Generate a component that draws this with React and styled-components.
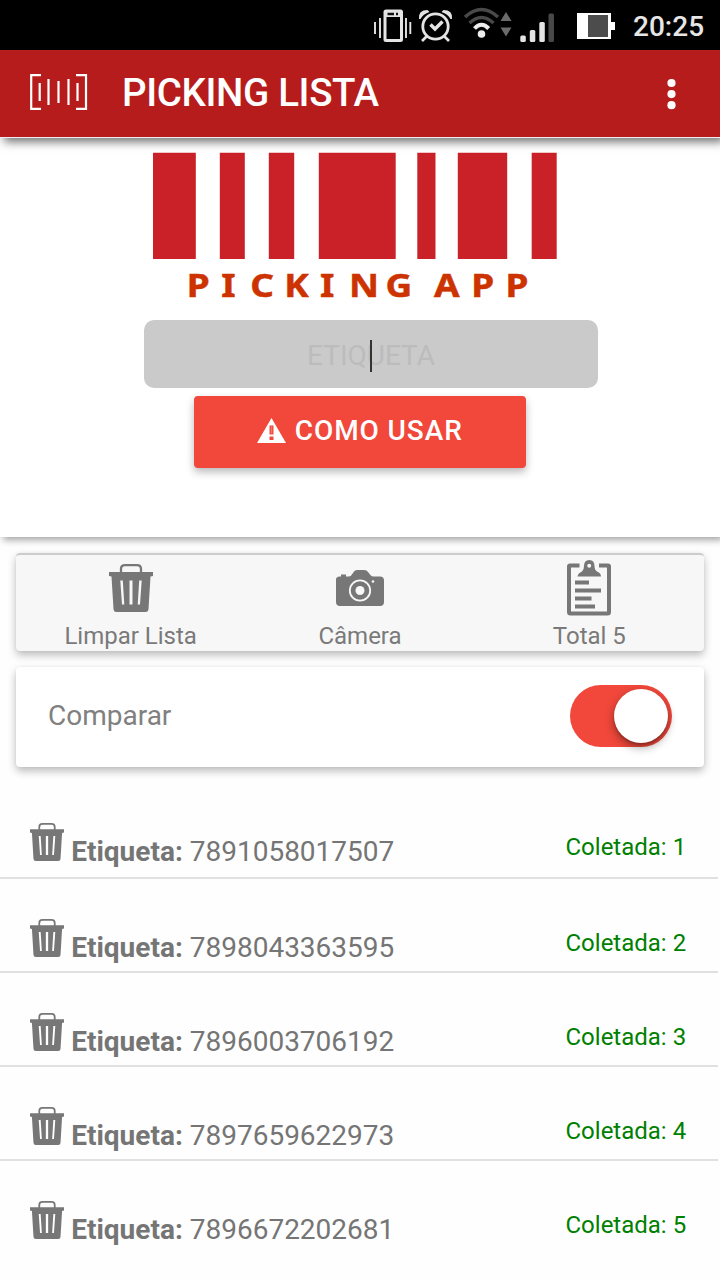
import React from 'react';
import styled, { createGlobalStyle } from 'styled-components';

const GlobalStyle = createGlobalStyle`
  *, *::before, *::after { box-sizing: border-box; }
  body { margin: 0; background: #fefefe; font-family: Roboto, sans-serif; color: #777; }
`;

const Screen = styled.div`
  width: 720px;
  height: 1280px;
  overflow: hidden;
  display: flex;
  flex-direction: column;
`;

const StatusBar = styled.header`
  flex: none;
  height: 50px;
  background: #000;
  display: flex;
  align-items: center;
  justify-content: flex-end;
  padding-right: 16px;
`;

const StatusIcons = styled.svg`
  display: block;
  width: 246px;
  height: 50px;
`;

const Clock = styled.time`
  margin-left: 17px;
  width: 71px;
  font-size: 28px;
  font-weight: 500;
  line-height: 50px;
  padding-top: 4px;
  color: #e6e6e6;
`;

const AppBar = styled.div`
  flex: none;
  height: 87px;
  background: #b71c1c;
  display: flex;
  align-items: center;
  padding: 0 38px 0 30px;
  position: relative;
  z-index: 1;
  box-shadow: 0 1px 0 #eee, 4px 5px 9px rgba(0, 0, 0, 0.55);
`;

const BarcodeIcon = styled.svg`
  display: block;
  width: 58px;
  height: 36px;
  margin-top: -3px;
`;

const Title = styled.h1`
  margin: 0 auto 0 34px;
  font-size: 38.5px;
  letter-spacing: -0.35px;
  line-height: 46px;
  padding-bottom: 2px;
  font-weight: 500;
  color: #fff;
  white-space: nowrap;
`;

const MenuButton = styled.button`
  border: 0;
  padding: 0;
  background: none;
  width: 20px;
  height: 32px;
  display: flex;
  svg { display: block; }
`;

const Hero = styled.section`
  flex: none;
  height: 399.5px;
  background: #fff;
  display: flex;
  flex-direction: column;
  align-items: center;
  padding-top: 13px;
  box-shadow: 3px 3px 7px rgba(0, 0, 0, 0.36);
`;

const Logo = styled.svg`
  display: block;
  width: 430px;
  height: 170.4px;
`;

const TagField = styled.label`
  width: 454px;
  height: 68px;
  margin-left: 22px;
  border-radius: 10px;
  background: #cacaca;
  display: grid;
  place-items: center;
  font-size: 28px;
  color: #bcbcbc;
  padding-top: 2px;
  > * { grid-area: 1 / 1; }
`;

const Caret = styled.i`
  width: 2px;
  height: 32px;
  margin-top: 2px;
  background: #333;
`;

const HelpButton = styled.button`
  width: 332px;
  height: 72px;
  margin-top: 8px;
  border: 0;
  border-radius: 4px;
  background: #f1483b;
  color: #fff;
  display: flex;
  align-items: center;
  justify-content: center;
  gap: 8.5px;
  padding: 0 0 4px;
  font: 500 28px Roboto, sans-serif;
  letter-spacing: 0.9px;
  box-shadow: 0 4px 8px rgba(0, 0, 0, 0.28);
`;

const Card = styled.section`
  flex: none;
  margin: ${(p) => p.$top}px 16px 0;
  height: ${(p) => p.$height}px;
  border-radius: 4px;
  background: ${(p) => p.$fill};
  box-shadow: 0 4px 8px rgba(0, 0, 0, 0.27), 0 0 3px rgba(0, 0, 0, 0.04);
`;

const Actions = styled.div`
  height: 100%;
  border-top: 2px solid #ccc;
  border-radius: 4px;
  display: grid;
  grid-template-columns: repeat(3, 1fr);
`;

const Action = styled.button`
  border: 0;
  padding: 4.5px 0 0;
  background: none;
  color: #7a7a7a;
  display: flex;
  flex-direction: column;
  align-items: center;
  font: 24px/28px Roboto, sans-serif;
  svg { display: block; flex: none; margin-bottom: 4.5px; }
`;

const Compare = styled.div`
  height: 100%;
  display: flex;
  align-items: center;
  justify-content: space-between;
  padding: 0 32px;
  font-size: 28px;
  color: #808080;
  span { margin-top: -2.5px; }
`;

const Toggle = styled.div`
  width: 102px;
  height: 62px;
  margin-top: -2px;
  border-radius: 31px;
  background: #f1483b;
  display: flex;
  justify-content: flex-end;
  padding: 4px;
`;

const Knob = styled.div`
  width: 54px;
  height: 54px;
  border-radius: 50%;
  background: #fff;
  box-shadow: 0 4px 10px rgba(0, 0, 0, 0.4), 0 2px 2px rgba(0, 0, 0, 0.15);
`;

const List = styled.ul`
  flex: none;
  list-style: none;
  margin: 18.5px 2px 0 0;
  padding: 0;
`;

const Row = styled.li`
  height: 94px;
  border-bottom: 2px solid #e0e0e0;
  display: flex;
  align-items: flex-end;
  padding: 0 32px 13px 30px;
  line-height: 0;
  &:first-child { padding-bottom: 15px; }
  &:last-child { border-bottom-color: transparent; }
  > svg { flex: none; display: block; margin-bottom: 0.7px; }
`;

const Tag = styled.span`
  margin-left: 7.2px;
  font-size: 28px;
  line-height: 20px;
  color: #757575;
  white-space: nowrap;
  b { font-weight: 700; }
`;

const Count = styled.span`
  margin-left: auto;
  width: 120.5px;
  font-size: 24px;
  line-height: 20px;
  margin-bottom: 5px;
  color: #008000;
  white-space: nowrap;
`;

const Trash = ({ width, height, gap }) => (
  <svg width={width} height={height} viewBox="0 0 44 48" preserveAspectRatio="none">
    <path d="M12 9V5Q12 1.200 16 1.200H28Q32 1.200 32 5V9" fill="none" stroke="#777" strokeWidth="2.300" />
    <path d="M0 8H44V12L41.500 12.500L39.500 45Q39.300 48 36.500 48H7.500Q4.700 48 4.500 45L2.500 12.500L0 12Z" fill="#777" />
    <path d="M11.300 16.500H13.800L15.300 40.500H13ZM20.500 16.500H23.500V40.500H20.500ZM30.200 16.500H32.700L31 40.500H28.700Z" fill={gap} />
  </svg>
);

const Camera = () => (
  <svg width="48" height="58" viewBox="0 0 48 58">
    <path d="M3 17.500H5V15.500H10V17.500H13Q15 17.500 17 14L18 12.500Q19 11 21 11H28Q31 11 32 13L34 15.500Q35.500 17.500 37 17.500H44Q48 17.500 48 21.500V43Q48 47 44 47H4Q0 47 0 43V20.500Q0 18 3 17.500Z" fill="#777" />
    <circle cx="24" cy="31.500" r="10.200" fill="none" stroke="#f7f7f7" strokeWidth="1.800" />
    <circle cx="24" cy="31.500" r="4.500" fill="#f7f7f7" />
    <circle cx="37" cy="22.500" r="1.300" fill="#f7f7f7" />
  </svg>
);

const Clipboard = () => (
  <svg width="46" height="58" viewBox="0 0 46 58">
    <path d="M13.500 6.500H4Q3 6.500 3 7.500V53Q3 54.500 4.500 54.500H41.500Q43 54.500 43 53V7.500Q43 6.500 42 6.500H33" fill="none" stroke="#777" strokeWidth="4" strokeLinejoin="round" />
    <path fillRule="evenodd" d="M11.500 17.500Q12 14 16 12.500Q18 11 18 7Q18 1 23.200 1Q28.500 1 28.500 7Q28.500 11 31 12.500Q35 14 35 17.500ZM23.200 4.700A2 2 0 1 0 23.200 8.700A2 2 0 1 0 23.200 4.700Z" fill="#777" />
    <path d="M9 23.500H23M9 31.500H35M9 39.500H25.500M9 47.500H29" stroke="#777" strokeWidth="4" />
  </svg>
);

const StatusGlyphs = () => (
  <StatusIcons viewBox="370 0 246 50">
    <g fill="none" stroke="#e4e4e4" strokeWidth="1.900">
      <path d="M375 22V34M380 18V38M406 18V38M410.300 22V34" />
      <rect x="385" y="11" width="16.500" height="29.500" rx="1" strokeWidth="3" />
    </g>
    <path d="M385 11H402V17H385Z" fill="#e4e4e4" />
    <path d="M387.500 12.700H394V15.200H387.500ZM396 12.700H398V15.200H396Z" fill="#111" />
    <g fill="none" stroke="#e4e4e4" strokeWidth="2.800">
      <circle cx="435.500" cy="26.500" r="12.700" />
      <path d="M430.500 24.500L435 29L442.500 21.500" strokeWidth="3.400" />
      <path d="M427 36L422 41M444 36L449 41" strokeWidth="2.800" />
    </g>
    <path d="M419 19Q418 10 427.500 10L429.500 12Q423 14 420.500 19ZM452 19Q453 10 443.500 10L441.500 12Q448 14 450.500 19Z" fill="#e4e4e4" />
    <g fill="none" stroke="#494949" strokeWidth="3.400">
      <path d="M465 17Q481.500 2 498 17M469.500 23Q481.500 12 493.500 23" />
      <path d="M474.500 28.500Q481.500 21 488.700 28.500" stroke="#ededed" strokeWidth="4" />
    </g>
    <circle cx="481.500" cy="34" r="3.800" fill="#ededed" />
    <path d="M500.500 21L506 12L511.500 21ZM500.500 27.500H511.500L506 36.500Z" fill="#6b6b6b" />
    <g fill="#e4e4e4">
      <rect x="520.300" y="35.500" width="5.500" height="6.500" rx="1.500" />
      <rect x="529.800" y="30" width="5.500" height="12" rx="1.500" />
      <rect x="539.300" y="22" width="5.500" height="20" rx="1.500" />
      <rect x="548.500" y="13.500" width="5.500" height="28.500" rx="1.500" fill="#484848" />
    </g>
    <path d="M577 13H611V22H615V30H611V39H577Z" fill="#fff" />
    <rect x="588" y="15" width="20" height="22" fill="#4c4c4c" />
  </StatusIcons>
);

const tags = ['7891058017507', '7898043363595', '7896003706192', '7897659622973', '7896672202681'];

export default function App() {
  return (
    <Screen>
      <GlobalStyle />
      <StatusBar>
        <StatusGlyphs />
        <Clock>20:25</Clock>
      </StatusBar>
      <AppBar>
        <BarcodeIcon viewBox="0 0 58 36" fill="none" stroke="#fff" strokeWidth="2.200">
          <path d="M11 1.200H1.200V34.800H11M46 1.200H56V34.800H46" />
          <path d="M9.700 9V27M18.500 5V31M28.500 7V29M38.500 5V31M47.500 9V27" />
        </BarcodeIcon>
        <Title>PICKING LISTA</Title>
        <MenuButton aria-label="Menu">
          <svg width="20" height="32" viewBox="0 0 20 32" fill="#fff">
            <circle cx="9.500" cy="5" r="4.100" />
            <circle cx="9.500" cy="16.100" r="4.100" />
            <circle cx="9.500" cy="27.200" r="4.100" />
          </svg>
        </MenuButton>
      </AppBar>
      <Hero>
        <Logo viewBox="145 150 430 170.400">
          <path
            fill="#c92127"
            d="M153 152.700H195.800V259H153ZM219.800 152.700H244.800V259H219.800ZM268.800 152.700H294.200V259H268.800ZM318.800 152.700H395.700V259H318.800ZM417.300 152.700H435.500V259H417.300ZM457.800 152.700H507.200V259H457.800ZM531.700 152.700H556.700V259H531.700Z"
          />
          <text
            transform="scale(1.120 1)"
            x="166.700 197.500 223.400 253.700 285.700 311.600 344.300 387.500 420.800 451.300"
            y="297"
            fill="#cc3300"
            stroke="#cc3300"
            strokeWidth="0.500"
            fontFamily="'Noto Sans', sans-serif"
            fontSize="33"
            fontWeight="700"
          >
            PICKINGAPP
          </text>
        </Logo>
        <TagField>
          <span>ETIQUETA</span>
          <Caret />
        </TagField>
        <HelpButton>
          <svg width="29" height="25" viewBox="0 0 29 25">
            <path d="M14.500 0L29 25H0Z" fill="#fff" />
            <path d="M12.500 7.500H16.500V16.500H12.500ZM12.500 18.500H16.500V22H12.500Z" fill="#f1483b" />
            <path d="M13.800 8.500H15.200V15.500H13.800Z" fill="#fff" opacity="0.25" />
          </svg>
          COMO USAR
        </HelpButton>
      </Hero>
      <Card $top={16} $height={98} $fill="#f7f7f7">
        <Actions>
          <Action>
            <svg width="44" height="58" viewBox="0 0 44 58">
              <g transform="translate(0 5)">
                <Trash width={44} height={48} gap="#f7f7f7" />
              </g>
            </svg>
            Limpar Lista
          </Action>
          <Action>
            <Camera />
            Câmera
          </Action>
          <Action>
            <Clipboard />
            Total 5
          </Action>
        </Actions>
      </Card>
      <Card $top={16} $height={100} $fill="#fff">
        <Compare>
          <span>Comparar</span>
          <Toggle>
            <Knob />
          </Toggle>
        </Compare>
      </Card>
      <List>
        {tags.map((tag, i) => (
          <Row key={tag}>
            <Trash width={34} height={38} gap="#fefefe" />
            <Tag>
              <b>Etiqueta:</b> {tag}
            </Tag>
            <Count>Coletada: {i + 1}</Count>
          </Row>
        ))}
      </List>
    </Screen>
  );
}
